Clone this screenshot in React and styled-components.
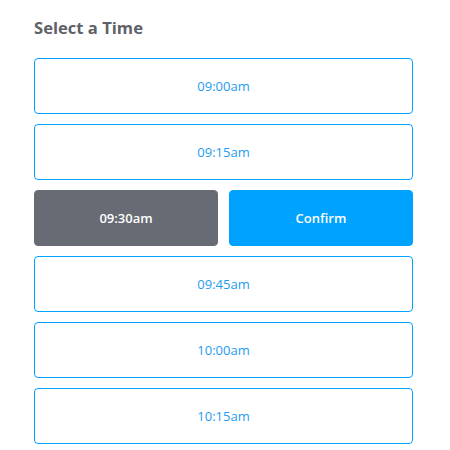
import styled, { createGlobalStyle } from 'styled-components';

const GlobalStyle = createGlobalStyle`
  body {
    margin: 0;
    background: #fff;
    font-family: "Open Sans", "Lato", sans-serif;
  }
`;

const times = ['09:00am', '09:15am', '09:30am', '09:45am', '10:00am', '10:15am'];
const selected = '09:30am';

function App() {
  return (
    <Page>
      <GlobalStyle />
      <Title>Select a Time</Title>
      <List>
        {times.map((t) =>
          t === selected ? (
            <Split key={t}>
              <Slot $active>{t}</Slot>
              <ConfirmButton>Confirm</ConfirmButton>
            </Split>
          ) : (
            <Slot key={t}>{t}</Slot>
          )
        )}
      </List>
    </Page>
  );
}

const Page = styled.div`
  width: 379px;
  padding: 16px 0 0 34px;
`;

const Title = styled.h2`
  margin: 0 0 18px;
  font-size: 16.6px;
  font-weight: 700;
  color: #5f6168;
  line-height: 24px;
`;

const List = styled.div`
  display: flex;
  flex-direction: column;
  gap: 10px;
`;

const Split = styled.div`
  display: grid;
  grid-template-columns: 1fr 1fr;
  gap: 11px;
`;

const Slot = styled.button`
  height: 56px;
  width: 100%;
  border-radius: 4px;
  border: 1px solid ${(p) => (p.$active ? '#676b73' : '#00a2ff')};
  background: ${(p) => (p.$active ? '#676b73' : '#fff')};
  color: ${(p) => (p.$active ? '#fff' : '#1f9bf0')};
  font-family: "Open Sans", "Lato", sans-serif;
  font-size: 13px;
  font-weight: ${(p) => (p.$active ? 600 : 400)};
  cursor: pointer;
  padding: 0;
`;

const ConfirmButton = styled.button`
  height: 56px;
  width: 100%;
  border-radius: 4px;
  border: 1px solid #00a2ff;
  background: #00a2ff;
  color: #fff;
  font-family: "Open Sans", "Lato", sans-serif;
  font-size: 13px;
  font-weight: 600;
  cursor: pointer;
`;

export default App;
